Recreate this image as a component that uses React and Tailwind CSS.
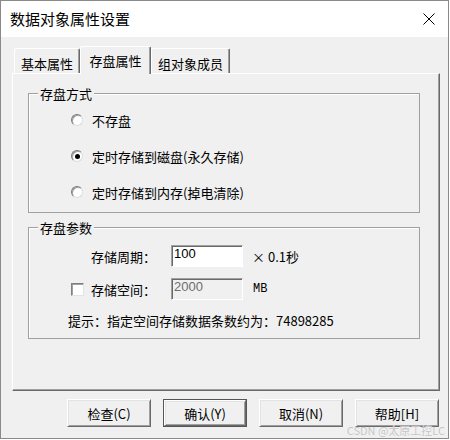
const cjk = "font-['Noto_Sans_CJK_SC',sans-serif]"

function Tab({ label, active, className }) {
  if (active) {
    return (
      <div className={`h-[28px] -mb-[1px] relative z-10 bg-[#f0f0f0] rounded-t-[2px] border-t border-l border-r border-t-white border-l-white border-r-[#696969] shadow-[inset_-1px_0_0_#a0a0a0] flex justify-center pt-[7px] leading-[13px] ${className}`}>
        {label}
      </div>
    )
  }
  return (
    <div className={`h-[25px] bg-[#f0f0f0] rounded-t-[2px] border-t border-l border-r border-t-white border-l-white border-r-[#696969] shadow-[inset_-1px_0_0_#a0a0a0] flex justify-center pt-[8px] leading-[13px] ${className}`}>
      {label}
    </div>
  )
}

function GroupBox({ title, className, children }) {
  return (
    <div className={`w-[392px] border border-[#a0a0a0] shadow-[inset_1px_1px_0_#ffffff] ${className}`}>
      <div className="-mt-[7px] ml-[9px] px-[2px] w-fit bg-[#f0f0f0] leading-[13px]">{title}</div>
      {children}
    </div>
  )
}

function Radio({ checked, label }) {
  return (
    <div className="flex items-center h-[16px] pl-[42px] gap-[9px]">
      <span className="flex items-center justify-center w-[12px] h-[12px] rounded-full bg-white border border-t-[#7a7a7a] border-l-[#7a7a7a] border-r-[#dcdcdc] border-b-[#dcdcdc] shadow-[inset_1px_1px_0_#a0a0a0]">
        {checked && <span className="w-[5px] h-[5px] rounded-full bg-black" />}
      </span>
      <span className="leading-[13px]">{label}</span>
    </div>
  )
}

function Field({ value, disabled }) {
  return (
    <div className={`w-[72px] h-[22px] border border-t-[#a0a0a0] border-l-[#a0a0a0] border-r-white border-b-white shadow-[inset_1px_1px_0_#696969] pl-[2px] font-['Liberation_Sans',sans-serif] text-[13px] leading-[15px] ${disabled ? 'bg-[#f0f0f0] text-[#6d6d6d]' : 'bg-white text-black'}`}>
      {value}
    </div>
  )
}

function Button({ label, primary }) {
  const face = (
    <div className="w-full h-full bg-[#f0f0f0] border border-t-white border-l-white border-r-[#696969] border-b-[#696969] shadow-[inset_1px_1px_0_#e3e3e3,inset_-1px_-1px_0_#a0a0a0] flex items-center justify-center leading-[13px]">
      {label}
    </div>
  )
  if (primary) {
    return <div className="w-[84px] h-[28px] border border-[#555555]">{face}</div>
  }
  return <div className="w-[84px] h-[28px]">{face}</div>
}

export default function App() {
  return (
    <div className={`w-[450px] h-[440px] bg-white text-[13px] text-black ${cjk}`}>
      <div className="relative w-[449px] h-[439px] border border-[#8a8a8a] bg-[#f0f0f0] flex flex-col">
        {/* title bar */}
        <div className="h-[36px] bg-white flex items-center pl-[9px] pr-[13px]">
          <span className="text-[15px] leading-[18px]">数据对象属性设置</span>
          <svg className="ml-auto" width="12" height="12" viewBox="0 0 12 12">
            <path d="M0.5 0.5 L11.5 11.5 M11.5 0.5 L0.5 11.5" stroke="#000" strokeWidth="1" fill="none" />
          </svg>
        </div>

        {/* body */}
        <div className="flex-1 pl-[11px] pr-[8px]">
          <div className="mt-[9px] h-[27px] flex items-end">
            <Tab label="基本属性" className="w-[66px] ml-[2px]" />
            <Tab label="存盘属性" active className="w-[71px]" />
            <Tab label="组对象成员" className="w-[79px]" />
          </div>

          <div className="w-[428px] h-[318px] border border-t-white border-l-white border-r-[#696969] border-b-[#696969] shadow-[inset_-1px_-1px_0_#a0a0a0] pl-[15px] pt-[19px]">
            <GroupBox title="存盘方式" className="h-[120px]">
              <div className="mt-[12px] flex flex-col gap-[20px]">
                <Radio label="不存盘" />
                <Radio checked label="定时存储到磁盘(永久存储)" />
                <Radio label="定时存储到内存(掉电清除)" />
              </div>
            </GroupBox>

            <GroupBox title="存盘参数" className="h-[112px] mt-[14px]">
              <div className="mt-[11px] flex items-center h-[22px] pl-[62px]">
                <span className="w-[80px] leading-[13px]">存储周期：</span>
                <Field value="100" />
                <span className="ml-[9px] leading-[13px]">× 0.1秒</span>
              </div>
              <div className="mt-[11px] flex items-center h-[22px] pl-[42px]">
                <span className="w-[13px] h-[13px] bg-white border border-t-[#808080] border-l-[#808080] border-r-[#e3e3e3] border-b-[#e3e3e3] shadow-[inset_1px_1px_0_#a0a0a0]" />
                <span className="ml-[7px] w-[80px] leading-[13px]">存储空间：</span>
                <Field value="2000" disabled />
                <span className="ml-[10px] leading-[13px] font-['Liberation_Mono',monospace] text-[12px]">MB</span>
              </div>
              <div className="mt-[14px] pl-[39px] leading-[13px]">
                提示：指定空间存储数据条数约为：74898285
              </div>
            </GroupBox>
          </div>

          <div className="mt-[8px] pr-[1px] flex justify-end gap-[12px]">
            <Button label="检查(C)" />
            <Button label="确认(Y)" primary />
            <Button label="取消(N)" />
            <Button label="帮助[H]" />
          </div>
        </div>

        <span className="absolute right-[3px] bottom-[1px] text-[11px] leading-[13px] text-[#c4c4c4] [text-shadow:0_0_1px_#ffffff]">
          CSDN @太原工控LC
        </span>
      </div>
    </div>
  )
}
